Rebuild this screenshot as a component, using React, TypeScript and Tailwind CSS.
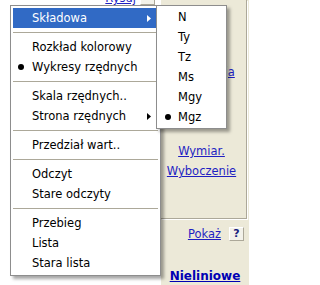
import React from 'react';

type MenuItem = { label: string; sub?: boolean; active?: boolean; checked?: boolean } | 'sep';

const mainItems: MenuItem[] = [
    { label: 'Składowa', sub: true, active: true },
    'sep',
    { label: 'Rozkład kolorowy' },
    { label: 'Wykresy rzędnych', checked: true },
    'sep',
    { label: 'Skala rzędnych..' },
    { label: 'Strona rzędnych', sub: true },
    'sep',
    { label: 'Przedział wart..' },
    'sep',
    { label: 'Odczyt' },
    { label: 'Stare odczyty' },
    'sep',
    { label: 'Przebieg' },
    { label: 'Lista' },
    { label: 'Stara lista' },
];

const subItems = [
    { label: 'N' },
    { label: 'Ty' },
    { label: 'Tz' },
    { label: 'Ms' },
    { label: 'Mgy' },
    { label: 'Mgz', checked: true },
];

function Arrow({ white }: { white?: boolean }) {
    return (
        <svg width="4" height="7" viewBox="0 0 4 7" className="ml-auto">
            <polygon points="0,0 4,3.5 0,7" fill={white ? '#ffffff' : '#000000'} />
        </svg>
    );
}

export default function App() {
    return (
        <div className="relative h-[285px] w-[249px] overflow-hidden bg-white font-['DejaVu_Sans',sans-serif] text-[11.5px] leading-[14px]">
            <div className="flex h-full">
                {/* left canvas */}
                <div className="w-[161px] bg-white">
                    <div className="flex h-[5px] items-end justify-end gap-[4px] overflow-hidden pr-[6px]">
                        <span className="text-[#1f1fc2] underline">Rysuj</span>
                        <span className="h-[14px] w-[15px] border border-t-white border-l-white border-r-[#aca899] border-b-[#aca899] bg-[#f3f2ea]" />
                    </div>
                </div>

                {/* right panel */}
                <div className="flex flex-1 flex-col bg-[#ece9d8]">
                    <div className="mr-[2px] flex h-[219px] flex-col items-center border-r border-b border-[#aca899] pr-[4px] pt-[65px] shadow-[1px_1px_0_#ffffff]">
                        <span className="text-[#1f1fc2] underline">Kombinacja</span>
                        <span className="mt-[65px] text-[#1f1fc2] underline">Wymiar.</span>
                        <span className="mt-[6px] text-[#1f1fc2] underline">Wyboczenie</span>
                    </div>
                    <div className="mt-[8px] flex items-center justify-end gap-[8px] pr-[5px]">
                        <span className="text-[#1f1fc2] underline">Pokaż</span>
                        <span className="flex h-[14px] w-[15px] items-center justify-center border border-t-white border-l-white border-r-[#aca899] border-b-[#aca899] bg-[#f3f2ea] text-[11px] font-bold text-[#1a237e]">
                            ?
                        </span>
                    </div>
                    <div className="mt-[28px] text-center text-[12px] font-bold text-[#0000b4] underline">
                        Nieliniowe
                    </div>
                </div>
            </div>

            {/* Main popup menu */}
            <div className="absolute left-[10px] top-[5px] w-[151px] border border-[#8d8d8d] bg-white p-[2px] shadow-[3px_3px_3px_rgba(0,0,0,0.35)]">
                {mainItems.map((item, i) =>
                    item === 'sep' ? (
                        <div key={i} className="flex h-[9px] items-center">
                            <div className="h-px w-full bg-[#aca899]" />
                        </div>
                    ) : (
                        <div
                            key={i}
                            className={`flex h-[20px] items-center pr-[7px] ${item.active ? 'bg-[#316ac5] text-white' : 'text-black'}`}
                        >
                            <span className="flex w-[15px] justify-center">
                                {item.checked && <span className="h-[6px] w-[6px] rounded-full bg-black" />}
                            </span>
                            <span className="ml-[4px] whitespace-nowrap">{item.label}</span>
                            {item.sub && <Arrow white={item.active} />}
                        </div>
                    )
                )}
            </div>

            {/* Submenu */}
            <div className="absolute left-[156px] top-[5px] w-[71px] border border-[#8d8d8d] bg-white py-[1px] shadow-[3px_3px_3px_rgba(0,0,0,0.35)]">
                {subItems.map((item) => (
                    <div key={item.label} className="flex h-[20px] items-center text-black">
                        <span className="ml-[1px] flex w-[20px] justify-center">
                            {item.checked && <span className="h-[6px] w-[6px] rounded-full bg-black" />}
                        </span>
                        <span>{item.label}</span>
                    </div>
                ))}
            </div>
        </div>
    );
}
